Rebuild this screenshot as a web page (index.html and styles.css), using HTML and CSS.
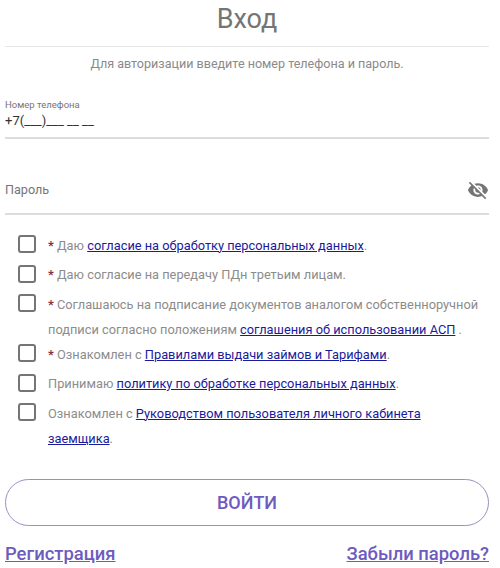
FILE: index.html
```html
<!DOCTYPE html>
<html lang="ru">
<head>
<meta charset="utf-8">
<title>Вход</title>
<link rel="stylesheet" href="styles.css">
</head>
<body>
<main class="page">
  <h1 class="title">Вход</h1>
  <p class="hint">Для авторизации введите номер телефона и пароль.</p>
  <div class="field phone">
    <div class="label">Номер телефона</div>
    <div class="value">+7(___)___ __ __</div>
  </div>
  <div class="field password">
    <span class="placeholder">Пароль</span>
    <svg class="eye" viewBox="0 0 24 24" width="22" height="22"><path d="M12 7c2.76 0 5 2.24 5 5 0 .65-.13 1.26-.36 1.83l2.92 2.92c1.51-1.26 2.7-2.89 3.43-4.75-1.73-4.39-6-7.5-11-7.5-1.4 0-2.74.25-3.98.7l2.16 2.16C10.74 7.13 11.35 7 12 7zM2 4.27l2.28 2.28.46.46C3.08 8.3 1.78 10.02 1 12c1.73 4.39 6 7.5 11 7.5 1.55 0 3.03-.3 4.38-.84l.42.42L19.73 22 21 20.73 3.27 3 2 4.27zM7.53 9.8l1.55 1.55c-.05.21-.08.43-.08.65 0 1.66 1.34 3 3 3 .22 0 .44-.03.65-.08l1.55 1.55c-.67.33-1.41.53-2.2.53-2.76 0-5-2.24-5-5 0-.79.2-1.53.53-2.2zm4.31-.78l3.15 3.15.02-.16c0-1.66-1.34-3-3-3l-.17.01z"/></svg>
  </div>
  <ul class="checks">
    <li class="check"><span class="box"></span><p><b>*</b> Даю <a href="#">согласие на обработку персональных данных</a>.</p></li>
    <li class="check"><span class="box"></span><p><b>*</b> Даю согласие на передачу ПДн третьим лицам.</p></li>
    <li class="check"><span class="box"></span><p><b>*</b> Соглашаюсь на подписание документов аналогом собственноручной подписи согласно положениям <a href="#">соглашения об использовании АСП</a> .</p></li>
    <li class="check"><span class="box"></span><p><b>*</b> Ознакомлен с <a href="#">Правилами выдачи займов и Тарифами</a>.</p></li>
    <li class="check"><span class="box"></span><p>Принимаю <a href="#">политику по обработке персональных данных</a>.</p></li>
    <li class="check"><span class="box"></span><p>Ознакомлен с <a href="#">Руководством пользователя личного кабинета заемщика</a>.</p></li>
  </ul>
  <button class="login" type="button">ВОЙТИ</button>
  <div class="links">
    <a href="#">Регистрация</a>
    <a href="#">Забыли пароль?</a>
  </div>
</main>
</body>
</html>
```
FILE: styles.css
```css
* { box-sizing: border-box; }
html, body { margin: 0; padding: 0; background: #fff; }
body { font-family: Roboto, "Liberation Sans", sans-serif; height: 568px; overflow: hidden; }
.page { width: 484px; margin-left: 5px; }
.title {
  margin: 0; height: 47px; border-bottom: 1px solid #e6e6e6;
  font-size: 27px; font-weight: 400; line-height: 38px; text-align: center; color: #757575;
}
.hint { margin: 9px 0 0; font-size: 12.55px; line-height: 16px; text-align: center; color: #8a8a8a; }
.field { border-bottom: 2px solid #dcdcdc; }
.phone { margin-top: 24px; height: 43px; padding-top: 3px; }
.label { font-size: 9.5px; line-height: 12px; color: #757575; }
.value { margin-top: 1px; font-size: 13px; line-height: 18px; color: #333; }
.password {
  margin-top: 36px; height: 40px; padding-bottom: 8px;
  display: flex; align-items: center; justify-content: space-between;
}
.placeholder { font-size: 12.6px; color: #757575; margin-bottom: 2px; }
.eye { fill: #757575; }
.checks { list-style: none; margin: 17px 0 0; padding: 0 8px 0 12.5px; }
.check { display: flex; align-items: flex-start; gap: 12.5px; min-height: 29.5px; }
.box {
  flex: none; width: 18px; height: 18px; margin-top: 3px;
  border: 2px solid #757575; border-radius: 3px;
}
.check p { margin: 0.5px 0 -1.5px; font-size: 12.8px; line-height: 25.5px; color: #8c8c8c; }
.check b { font-weight: 700; color: #8c2f3c; }
.check a { color: #1a1a9c; text-decoration: underline; }
.login {
  display: block; width: 100%; height: 47px; margin-top: 29px;
  background: #fff; border: 1px solid #9a8fc4; border-radius: 24px;
  font-family: inherit; font-size: 18px; font-weight: 500; color: #6d5bc0;
}
.links { display: flex; justify-content: space-between; margin-top: 16px; font-size: 18.4px; font-weight: 500; line-height: 24px; }
.links a { color: #6d5bc0; text-decoration: underline; }
```
